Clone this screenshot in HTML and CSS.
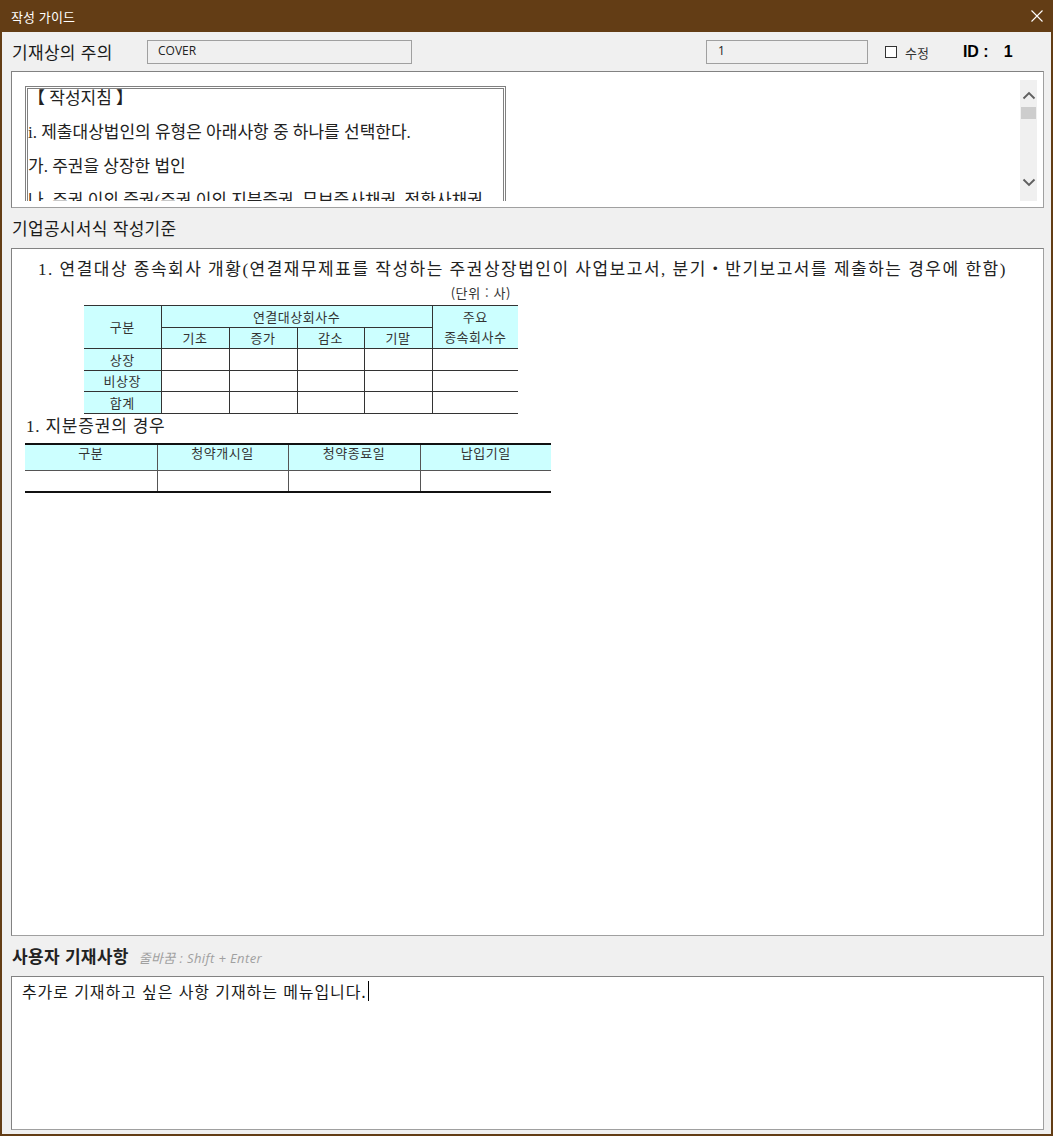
FILE: index.html
```html
<!DOCTYPE html>
<html lang="ko">
<head>
<meta charset="utf-8">
<title>작성 가이드</title>
<link rel="stylesheet" href="styles.css">
</head>
<body>
<div class="window">
  <div class="titlebar">
    <span class="title">작성 가이드</span>
    <svg class="close" width="12" height="12" viewBox="0 0 12 12"><path d="M0.5 0.5 L11.5 11.5 M11.5 0.5 L0.5 11.5" stroke="#fff" stroke-width="1.1" fill="none"/></svg>
  </div>
  <div class="body">
    <div class="row1">
      <span class="label lbl-w">기재상의 주의</span>
      <div class="field f-cover">COVER</div>
      <div class="field f-num">1</div>
      <label class="check"><span class="box"></span><span>수정</span></label>
      <span class="id">ID :</span><span class="id idv">1</span>
    </div>

    <div class="panel guide">
      <div class="guide-view">
        <div class="doc">
          <p class="gl">【 작성지침 】</p>
          <p class="gl">i. 제출대상법인의 유형은 아래사항 중 하나를 선택한다.</p>
          <p class="gl">가. 주권을 상장한 법인</p>
          <p class="gl">나. 주권 이외 증권(주권 이외 지분증권, 무보증사채권, 전환사채권</p>
        </div>
      </div>
      <div class="scrollbar">
        <svg class="arrow" width="14" height="9" viewBox="0 0 14 9"><path d="M1.5 7.5 L7 2 L12.5 7.5" stroke="#606060" stroke-width="1.9" fill="none"/></svg>
        <div class="thumb"></div>
        <div class="track"></div>
        <svg class="arrow" width="14" height="9" viewBox="0 0 14 9"><path d="M1.5 1.5 L7 7 L12.5 1.5" stroke="#606060" stroke-width="1.9" fill="none"/></svg>
      </div>
    </div>

    <div class="label-row"><span class="label">기업공시서식 작성기준</span></div>

    <div class="panel section">
      <p class="h1">1. 연결대상 종속회사 개황(연결재무제표를 작성하는 주권상장법인이 사업보고서, 분기・반기보고서를 제출하는 경우에 한함)</p>
      <div class="t1-wrap">
        <p class="unit">(단위 : 사)</p>
        <table class="t1">
          <colgroup><col class="c77"><col class="c68"><col class="c68"><col class="c67"><col class="c68"><col class="c86"></colgroup>
          <tr class="r22"><th rowspan="2" class="first">구분</th><th colspan="4">연결대상회사수</th><th rowspan="2" class="two">주요<br>종속회사수</th></tr>
          <tr class="r21"><th>기초</th><th>증가</th><th>감소</th><th>기말</th></tr>
          <tr class="r22"><th class="first">상장</th><td></td><td></td><td></td><td></td><td></td></tr>
          <tr class="r21"><th class="first">비상장</th><td></td><td></td><td></td><td></td><td></td></tr>
          <tr class="r22"><th class="first">합계</th><td></td><td></td><td></td><td></td><td></td></tr>
        </table>
      </div>
      <p class="h2">1. 지분증권의 경우</p>
      <table class="t2">
        <colgroup><col class="c132"><col class="c131"><col class="c132"><col class="c131"></colgroup>
        <tr class="hr"><th>구분</th><th>청약개시일</th><th>청약종료일</th><th>납입기일</th></tr>
        <tr class="br"><td></td><td></td><td></td><td></td></tr>
      </table>
    </div>

    <div class="label-row">
      <span class="label strong">사용자 기재사항</span>
      <span class="hint">줄바꿈 : Shift + Enter</span>
    </div>

    <div class="panel memo">
      <span class="memo-text">추가로 기재하고 싶은 사항 기재하는 메뉴입니다.</span><span class="caret"></span>
    </div>
  </div>
</div>
</body>
</html>
```

FILE: styles.css
```css
html, body {
  margin: 0;
  padding: 0;
  background: #633d15;
}

.window {
  width: 1053px;
  height: 1136px;
  box-sizing: border-box;
  background: #633d15;
  padding: 0 2px 2px 2px;
  display: flex;
  flex-direction: column;
  font-family: "Noto Sans CJK KR", "Noto Sans", sans-serif;
  color: #111;
}

.titlebar {
  height: 32px;
  flex: none;
  display: flex;
  align-items: center;
  justify-content: space-between;
  padding: 0 8px 0 9px;
}

.title {
  color: #fff;
  font-size: 13px;
  letter-spacing: 0.1px;
}

.close {
  display: block;
  margin-top: -1px;
}

.body {
  flex: 1;
  min-height: 0;
  background: #f0f0f0;
  display: flex;
  flex-direction: column;
  padding: 0 7px 4px 9px;
}

.row1 {
  flex: none;
  height: 24px;
  margin: 8px 0 7px 0;
  display: flex;
  align-items: center;
}

.label {
  font-size: 17px;
  line-height: 20px;
  letter-spacing: 0.3px;
  color: #1a1a1a;
  padding-left: 1px;
}

.lbl-w {
  width: 135px;
  flex: none;
}

.field {
  height: 24px;
  box-sizing: border-box;
  border: 1px solid #a0a0a0;
  background: #f0f0f0;
  font-family: "Open Sans", "Noto Sans", sans-serif;
  font-size: 12px;
  line-height: 20px;
  color: #222;
  padding-left: 10px;
}

.f-cover {
  width: 265px;
}

.f-num {
  width: 162px;
  margin-left: 294px;
  padding-left: 11px;
}

.check {
  display: flex;
  align-items: center;
  margin-left: 17px;
  font-size: 13px;
  color: #333;
}

.box {
  width: 12px;
  height: 12px;
  box-sizing: border-box;
  border: 1px solid #333;
  background: #fff;
  margin-right: 8px;
}

.id {
  margin-left: 34px;
  font-family: "Liberation Sans", Arial, sans-serif;
  font-weight: bold;
  font-size: 16px;
  color: #000;
}

.id.idv {
  margin-left: 15px;
}

.panel {
  background: #fff;
  border: 1px solid #a0a0a0;
  border-top-color: #828282;
  border-left-color: #828282;
  box-sizing: border-box;
}

.guide {
  flex: none;
  height: 137px;
  display: flex;
  padding: 8px 6px 6px 0;
}

.guide-view {
  flex: 1;
  overflow: hidden;
}

.doc {
  margin: 6px 0 0 13px;
  width: 481px;
  height: 200px;
  box-sizing: border-box;
  border: 3px double #808080;
  font-family: "Liberation Serif", "Noto Sans CJK KR", serif;
  font-size: 17px;
  color: #222;
}

.gl {
  margin: 0 0 14px 0;
  line-height: 20px;
  white-space: nowrap;
}

.scrollbar {
  width: 17px;
  flex: none;
  background: #f0f0f0;
  display: flex;
  flex-direction: column;
  align-items: center;
}

.arrow {
  display: block;
  margin: 11px 0 7px 0;
}

.arrow:last-child {
  margin: 0 0 14px 0;
}

.thumb {
  width: 15px;
  height: 12px;
  background: #cdcdcd;
}

.track {
  flex: 1;
}

.label-row {
  flex: none;
  height: 40px;
  display: flex;
  align-items: center;
  gap: 10px;
}

.strong {
  font-weight: bold;
  color: #222;
}

.hint {
  font-family: "Open Sans", "Noto Sans CJK KR", sans-serif;
  font-style: italic;
  font-size: 13px;
  letter-spacing: 0.4px;
  color: #a0a0a0;
  padding-top: 3px;
}

.section {
  flex: 1;
  min-height: 0;
  padding: 10px 0 0 13px;
  font-family: "Liberation Serif", "Noto Sans CJK KR", serif;
  color: #222;
}

.h1 {
  margin: 0 0 0 13px;
  font-size: 17px;
  line-height: 22px;
  letter-spacing: 1.5px;
  white-space: nowrap;
}

.t1-wrap {
  width: 434px;
  margin: 3px 0 0 59px;
}

.unit {
  margin: 0 0 3px 0;
  text-align: right;
  padding-right: 7px;
  font-family: "Noto Sans CJK KR", sans-serif;
  font-size: 13px;
  letter-spacing: 0.6px;
  line-height: 18px;
  color: #333;
}

table {
  border-collapse: collapse;
  table-layout: fixed;
  font-family: "Noto Sans CJK KR", sans-serif;
  font-size: 13px;
  color: #333;
  letter-spacing: 0.5px;
}

.t1 {
  width: 434px;
  border-bottom: 1px solid #333;
}

.c77 { width: 77px; }
.c68 { width: 68px; }
.c67 { width: 67px; }
.c86 { width: 86px; }
.c132 { width: 132px; }
.c131 { width: 131px; }

.t1 th, .t1 td {
  border-top: 1px solid #333;
  border-left: 1px solid #333;
  padding: 0;
  text-align: center;
  font-weight: normal;
  line-height: 16px;
}

.t1 th {
  background: #ccffff;
}

.t1 th.first {
  border-left: 0;
}

.t1 th.two {
  line-height: 20px;
}

.t1 td {
  background: #fff;
}

.r22 { height: 22px; }
.r21 { height: 21px; }

.h2 {
  margin: 2px 0 0 1px;
  font-size: 17px;
  line-height: 22px;
  letter-spacing: 0.8px;
}

.t2 {
  width: 526px;
  margin-top: 5px;
  border-top: 2px solid #111;
  border-bottom: 2px solid #111;
}

.t2 th, .t2 td {
  padding: 0;
  text-align: center;
  font-weight: normal;
  border-left: 1px solid #555;
}

.t2 th:first-child, .t2 td:first-child {
  border-left: 0;
}

.t2 th {
  background: #ccffff;
  vertical-align: top;
  padding-top: 0;
  line-height: 16px;
  border-bottom: 1px solid #555;
}

.t2 .hr { height: 26px; }
.t2 .br { height: 22px; }

.memo {
  flex: none;
  height: 154px;
  padding: 4px 0 0 10px;
  display: flex;
  align-items: flex-start;
}

.memo-text {
  font-size: 16px;
  line-height: 20px;
  letter-spacing: 0.9px;
  color: #1a1a1a;
}

.caret {
  width: 1px;
  height: 20px;
  background: #000;
  margin-left: 1px;
}
```
